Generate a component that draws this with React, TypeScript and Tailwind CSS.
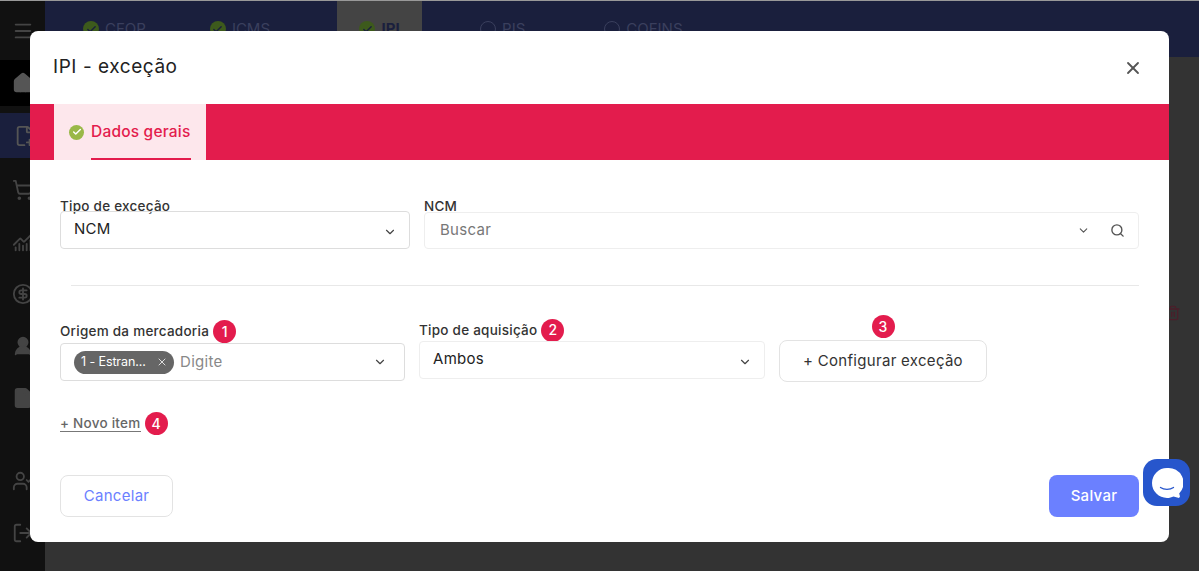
import React from "react";
import { X, ChevronDown, Search, Check, Home, FilePlus2, ShoppingCart, ChartNoAxesCombined, CircleDollarSign, UserRound, File, UserCheck, LogOut, Menu, Trash2 } from "lucide-react";

function Badge({ n, className = "" }: { n: number; className?: string }) {
  return (
    <span className={"flex h-[23px] w-[23px] shrink-0 items-center justify-center rounded-full bg-[#e31c4d] text-[14px] font-medium leading-none text-white " + className}>
      {n}
    </span>
  );
}

function Label({ children }: { children: React.ReactNode }) {
  return <span className="text-[13.5px] font-medium leading-[17px] tracking-[0.25px] text-[#333]">{children}</span>;
}

function Chevron({ className = "" }: { className?: string }) {
  return <ChevronDown size={14} strokeWidth={2} className={"text-[#444] " + className} />;
}

function NavTab({ label, done, active, className = "" }: { label: string; done?: boolean; active?: boolean; className?: string }) {
  return (
    <div className={"flex h-full items-center gap-[6px] pb-[0px] text-[15px] " + (active ? "bg-[#444] font-bold text-[#1a1f3d] " : "text-[#3a3f5d] ") + className}>
      {done ? (
        <span className="flex h-[16px] w-[16px] items-center justify-center rounded-full bg-[#3d5a1c]">
          <Check size={11} strokeWidth={3} className="text-[#1a1f3d]" />
        </span>
      ) : (
        <span className="h-[16px] w-[16px] rounded-full border border-[#3a3f5d]" />
      )}
      {label}
    </div>
  );
}

export default function App() {
  const side = "flex h-[52px] w-[45px] items-center pl-[12px] text-[#444]";
  return (
    <div className="relative h-[571px] w-[1199px] overflow-hidden bg-[#333]" style={{ fontFamily: "Inter, 'Liberation Sans', sans-serif" }}>
      <div className="flex h-full flex-col">
        <div className="h-px bg-[#999]" />
        <div className="flex flex-1">
          <aside className="flex w-[45px] flex-col bg-[#111]">
            <div className="flex h-[59px] items-center pl-[12px] text-[#444]"><Menu size={22} /></div>
            <div className="flex h-[46px] items-center bg-black pl-[12px] text-[#555]"><Home size={22} fill="#555" /></div>
            <div className="h-[7px]" />
            <div className="flex h-[45px] items-center bg-[#1a1f3d] pl-[14px] text-[#555]"><FilePlus2 size={22} /></div>
            <div className="h-[6px]" />
            <div className={side}><ShoppingCart size={22} /></div>
            <div className={side}><ChartNoAxesCombined size={22} /></div>
            <div className={side}><CircleDollarSign size={22} /></div>
            <div className={side}><UserRound size={22} fill="#444" /></div>
            <div className={side}><File size={22} fill="#444" /></div>
            <div className="h-[31px]" />
            <div className={side}><UserCheck size={22} /></div>
            <div className={side}><LogOut size={22} /></div>
          </aside>
          <main className="flex flex-1 flex-col">
            <div className="flex h-[56px] bg-[#1a1f3d]">
              <NavTab label="CFOP" done className="ml-[38px]" />
              <NavTab label="ICMS" done className="ml-[64px]" />
              <NavTab label="IPI" done active className="ml-[67px] w-[85px] justify-center" />
              <NavTab label="PIS" className="ml-[58px]" />
              <NavTab label="COFINS" className="ml-[79px]" />
            </div>
            <div className="flex flex-1 justify-end pr-[18px] pt-[248px]">
              <Trash2 size={16} className="text-[#4a1f2a]" />
            </div>
          </main>
        </div>
      </div>

      <div className="absolute left-[30px] top-[31px] flex h-[511px] w-[1139px] flex-col overflow-hidden rounded-[8px] bg-white text-[#333]">
        <div className="flex h-[73px] shrink-0 items-center justify-between pl-[23px] pr-[26px]">
          <h2 className="text-[19px] font-normal tracking-[0.55px] text-[#222]">IPI - exceção</h2>
          <X size={20} strokeWidth={2.2} className="text-[#555]" />
        </div>
        <div className="flex h-[56px] shrink-0 bg-[#e31c4d] pl-[24px]">
          <div className="relative flex w-[152px] items-center bg-[#fde7ec] pl-[15px]">
            <span className="flex h-[15px] w-[15px] items-center justify-center rounded-full bg-[#9ab848]">
              <Check size={10} strokeWidth={3.5} className="text-white" />
            </span>
            <span className="ml-[7px] text-[15.5px] font-medium tracking-[0.2px] text-[#e31c4d]">Dados gerais</span>
            <span className="absolute bottom-0 left-[37px] h-[2px] w-[100px] bg-[#e31c4d]" />
          </div>
        </div>

        <div className="flex flex-1 flex-col px-[30px]">
          <div className="mt-[33px] flex items-start">
            <div className="flex w-[350px] flex-col">
              <div className="h-[18px]"><Label>Tipo de exceção</Label></div>
              <div className="flex h-[38px] items-center justify-between rounded-[4px] border border-[#ddd] pl-[13px] pr-[12px]">
                <span className="pb-[2px] text-[15px] tracking-[0.3px] text-[#222]">NCM</span>
                <Chevron className="mt-[3px]" />
              </div>
            </div>
            <div className="ml-[14px] flex w-[715px] flex-col">
              <div className="h-[19px]"><Label>NCM</Label></div>
              <div className="flex h-[37px] items-center justify-between rounded-[4px] border border-[#eee] pl-[15px] pr-[13px]">
                <span className="text-[15px] tracking-[0.3px] text-[#777]">Buscar</span>
                <span className="flex items-center gap-[20px]">
                  <ChevronDown size={13} className="text-[#555]" />
                  <Search size={15} strokeWidth={2.2} className="text-[#555]" />
                </span>
              </div>
            </div>
          </div>

          <div className="ml-[11px] mt-[36px] h-px shrink-0 bg-[#e8e8e8]" />

          <div className="mt-[28px] flex items-start">
            <div className="mt-[6px] flex w-[345px] flex-col">
              <div className="flex h-[23px] items-center gap-[4px]">
                <Label>Origem da mercadoria</Label>
                <Badge n={1} />
              </div>
              <div className="flex h-[38px] items-center rounded-[4px] border border-[#ddd] pl-[13px] pr-[17px]">
                <span className="flex h-[23px] w-[100px] items-center justify-between rounded-full bg-[#666] pl-[7px] pr-[6px] text-[12.5px] tracking-[-0.1px] text-white">
                  1 - Estran...
                  <X size={12} className="text-[#ddd]" />
                </span>
                <span className="ml-[6px] text-[15px] tracking-[0.3px] text-[#888]">Digite</span>
                <Chevron className="ml-auto" />
              </div>
            </div>
            <div className="ml-[14px] mt-[5px] flex w-[346px] flex-col">
              <div className="flex h-[23px] items-center gap-[4px] pb-[1px]">
                <Label>Tipo de aquisição</Label>
                <Badge n={2} />
              </div>
              <div className="-mt-[1px] flex h-[38px] items-center justify-between rounded-[4px] border border-[#eee] pl-[13px] pr-[12px]">
                <span className="pb-[2px] text-[15px] tracking-[0.3px] text-[#222]">Ambos</span>
                <Chevron className="mt-[3px]" />
              </div>
            </div>
            <div className="ml-[14px] flex w-[208px] flex-col items-center">
              <Badge n={3} className="mt-[1px]" />
              <div className="mt-[2px] flex h-[42px] w-full items-center justify-center rounded-[8px] border border-[#e3e3e3] text-[15px] tracking-[0.3px] text-[#333]">
                + Configurar exceção
              </div>
            </div>
          </div>

          <div className="mt-[30px] flex items-center gap-[4px]">
            <span className="border-b border-[#777] text-[13.5px] font-medium leading-[16px] tracking-[0.25px] text-[#666]">+ Novo item</span>
            <Badge n={4} />
          </div>

          <div className="mt-[40px] flex justify-between">
            <button className="h-[42px] w-[113px] rounded-[8px] border border-[#e3e3e3] bg-white text-[15px] tracking-[0.3px] text-[#6b80ff]">Cancelar</button>
            <button className="h-[42px] w-[90px] rounded-[8px] bg-[#6b80ff] text-[15px] font-medium tracking-[0.3px] text-white">Salvar</button>
          </div>
        </div>
      </div>

      <div className="absolute left-[1143px] top-[459px] flex h-[47px] w-[47px] items-center justify-center rounded-[14px] bg-[#2756cc]">
        <svg width="32" height="32" viewBox="0 0 32 32">
          <path d="M16 1a15 15 0 1 0 0 30c2.6 0 4.6-.6 6.500-1.500L28 31l1-1.500-.8-3A15 15 0 0 0 16 1z" fill="#fff" />
          <path d="M9.500 20.500c3.500 2.500 9.500 2.500 13 0" fill="none" stroke="#2756cc" strokeWidth="1.300" strokeLinecap="round" />
        </svg>
      </div>
    </div>
  );
}
